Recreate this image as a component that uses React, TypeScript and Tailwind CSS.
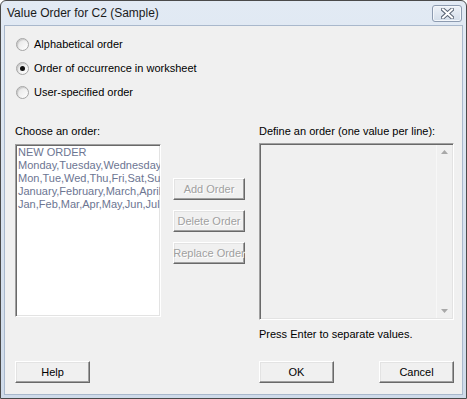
const font = { fontFamily: "'Liberation Sans', Arial, sans-serif" };

function Radio({ checked, label }: { checked?: boolean; label: string }) {
  return (
    <div className="flex h-[24px] items-center">
      <div className="ml-[11px] flex h-[13px] w-[13px] items-center justify-center rounded-full border border-[#a5a5a5] bg-gradient-to-br from-[#e4e4e4] to-white shadow-[inset_1px_1px_1px_#c8c8c8]">
        {checked && <div className="h-[5px] w-[5px] rounded-full bg-[#111]" />}
      </div>
      <span className="ml-[5px] text-[11px] leading-[13px] text-black">{label}</span>
    </div>
  );
}

function Btn({ label, disabled, width = "w-[72px]" }: { label: string; disabled?: boolean; width?: string }) {
  return (
    <div
      className={`flex h-[22px] ${width} items-center justify-center whitespace-nowrap border border-t-white border-l-white border-r-[#696969] border-b-[#696969] bg-[#f0f0f0] text-[11px] shadow-[inset_-1px_-1px_0_#a0a0a0,inset_1px_1px_0_#e3e3e3] ${
        disabled ? "text-[#a0a0a0] [text-shadow:1px_1px_0_#ffffff]" : "text-black"
      }`}
    >
      {label}
    </div>
  );
}

const lines = [
  "NEW ORDER",
  "Monday,Tuesday,Wednesday,Thursday,Friday,Saturday,Sunday",
  "Mon,Tue,Wed,Thu,Fri,Sat,Sun",
  "January,February,March,April,May,June,July,August",
  "Jan,Feb,Mar,Apr,May,Jun,Jul,Aug,Sep,Oct,Nov,Dec",
];

export default function App() {
  return (
    <div className="h-[399px] w-[467px] overflow-hidden bg-white" style={font}>
      <div className="flex h-full w-full flex-col rounded-t-[6px] border border-[#4a4a4a] bg-gradient-to-b from-[#e2eaf4] to-[#cfdbea]">
        {/* Title bar */}
        <div className="flex h-[24px] items-center justify-between pl-[6px] pr-[4px]">
          <span className="text-[12px] text-[#1a1a1a]">Value Order for C2 (Sample)</span>
          <div className="flex h-[17px] w-[30px] items-center justify-center rounded-[3px] border border-[#8d9bb0] bg-gradient-to-b from-[#eef2f8] to-[#d4deea] shadow-[inset_0_0_0_1px_#f4f7fb]">
            <svg width="13" height="11" viewBox="0 0 13 11">
              <path d="M2 1.5 L11 9.5 M11 1.5 L2 9.5" stroke="#5a6575" strokeWidth="4" strokeLinecap="square" />
              <path d="M2 1.5 L11 9.5 M11 1.5 L2 9.5" stroke="#ffffff" strokeWidth="2" strokeLinecap="square" />
            </svg>
          </div>
        </div>

        {/* Client area */}
        <div className="mx-[3px] mb-[3px] flex flex-1 flex-col border border-[#a9b8cc] bg-[#f0f0f0] pt-[6px]">
          <Radio label="Alphabetical order" />
          <Radio checked label="Order of occurrence in worksheet" />
          <Radio label="User-specified order" />

          <div className="mt-[21px] flex pl-[10px]">
            {/* Left column */}
            <div className="flex w-[146px] flex-col">
              <span className="h-[13px] text-[11px] leading-[13px] text-black">Choose an order:</span>
              <div className="mt-[6px] h-[173px] overflow-hidden whitespace-nowrap border border-t-[#a0a0a0] border-l-[#a0a0a0] border-r-white border-b-white bg-white pl-[2px] pt-[1px] shadow-[inset_1px_1px_0_#696969,inset_-1px_-1px_0_#e3e3e3]">
                {lines.map((l) => (
                  <div key={l} className="text-[11px] leading-[13px] text-[#6c7592]">
                    {l}
                  </div>
                ))}
              </div>
            </div>

            {/* Middle buttons */}
            <div className="ml-[12px] flex flex-col gap-[10px] pt-[53px]">
              <Btn label="Add Order" disabled />
              <Btn label="Delete Order" disabled />
              <Btn label="Replace Order" disabled />
            </div>

            {/* Right column */}
            <div className="ml-[14px] flex w-[195px] flex-col">
              <span className="h-[13px] text-[11px] leading-[13px] text-black">
                Define an order (one value per line):
              </span>
              <div className="mt-[5px] flex h-[177px] border border-t-[#a0a0a0] border-l-[#a0a0a0] border-r-white border-b-white bg-[#f0f0f0] shadow-[inset_1px_1px_0_#696969,inset_-1px_-1px_0_#e3e3e3]">
                <div className="flex-1" />
                <div className="my-[1px] mr-[1px] flex w-[16px] flex-col items-center justify-between border-l border-[#f7f7f7] bg-[#f0f0f0] py-[5px]">
                  <svg width="7" height="4" viewBox="0 0 7 4">
                    <path d="M0 4 L3.5 0 L7 4 Z" fill="#a8a8a8" />
                  </svg>
                  <svg width="7" height="4" viewBox="0 0 7 4">
                    <path d="M0 0 L3.5 4 L7 0 Z" fill="#a8a8a8" />
                  </svg>
                </div>
              </div>
            </div>
          </div>

          <div className="mt-[8px] pl-[254px] text-[11px] leading-[13px] text-black">
            Press Enter to separate values.
          </div>

          <div className="mt-[20px] flex pl-[10px]">
            <Btn label="Help" width="w-[75px]" />
            <div className="ml-[169px]">
              <Btn label="OK" width="w-[75px]" />
            </div>
            <div className="ml-[45px]">
              <Btn label="Cancel" width="w-[75px]" />
            </div>
          </div>
        </div>
      </div>
    </div>
  );
}
